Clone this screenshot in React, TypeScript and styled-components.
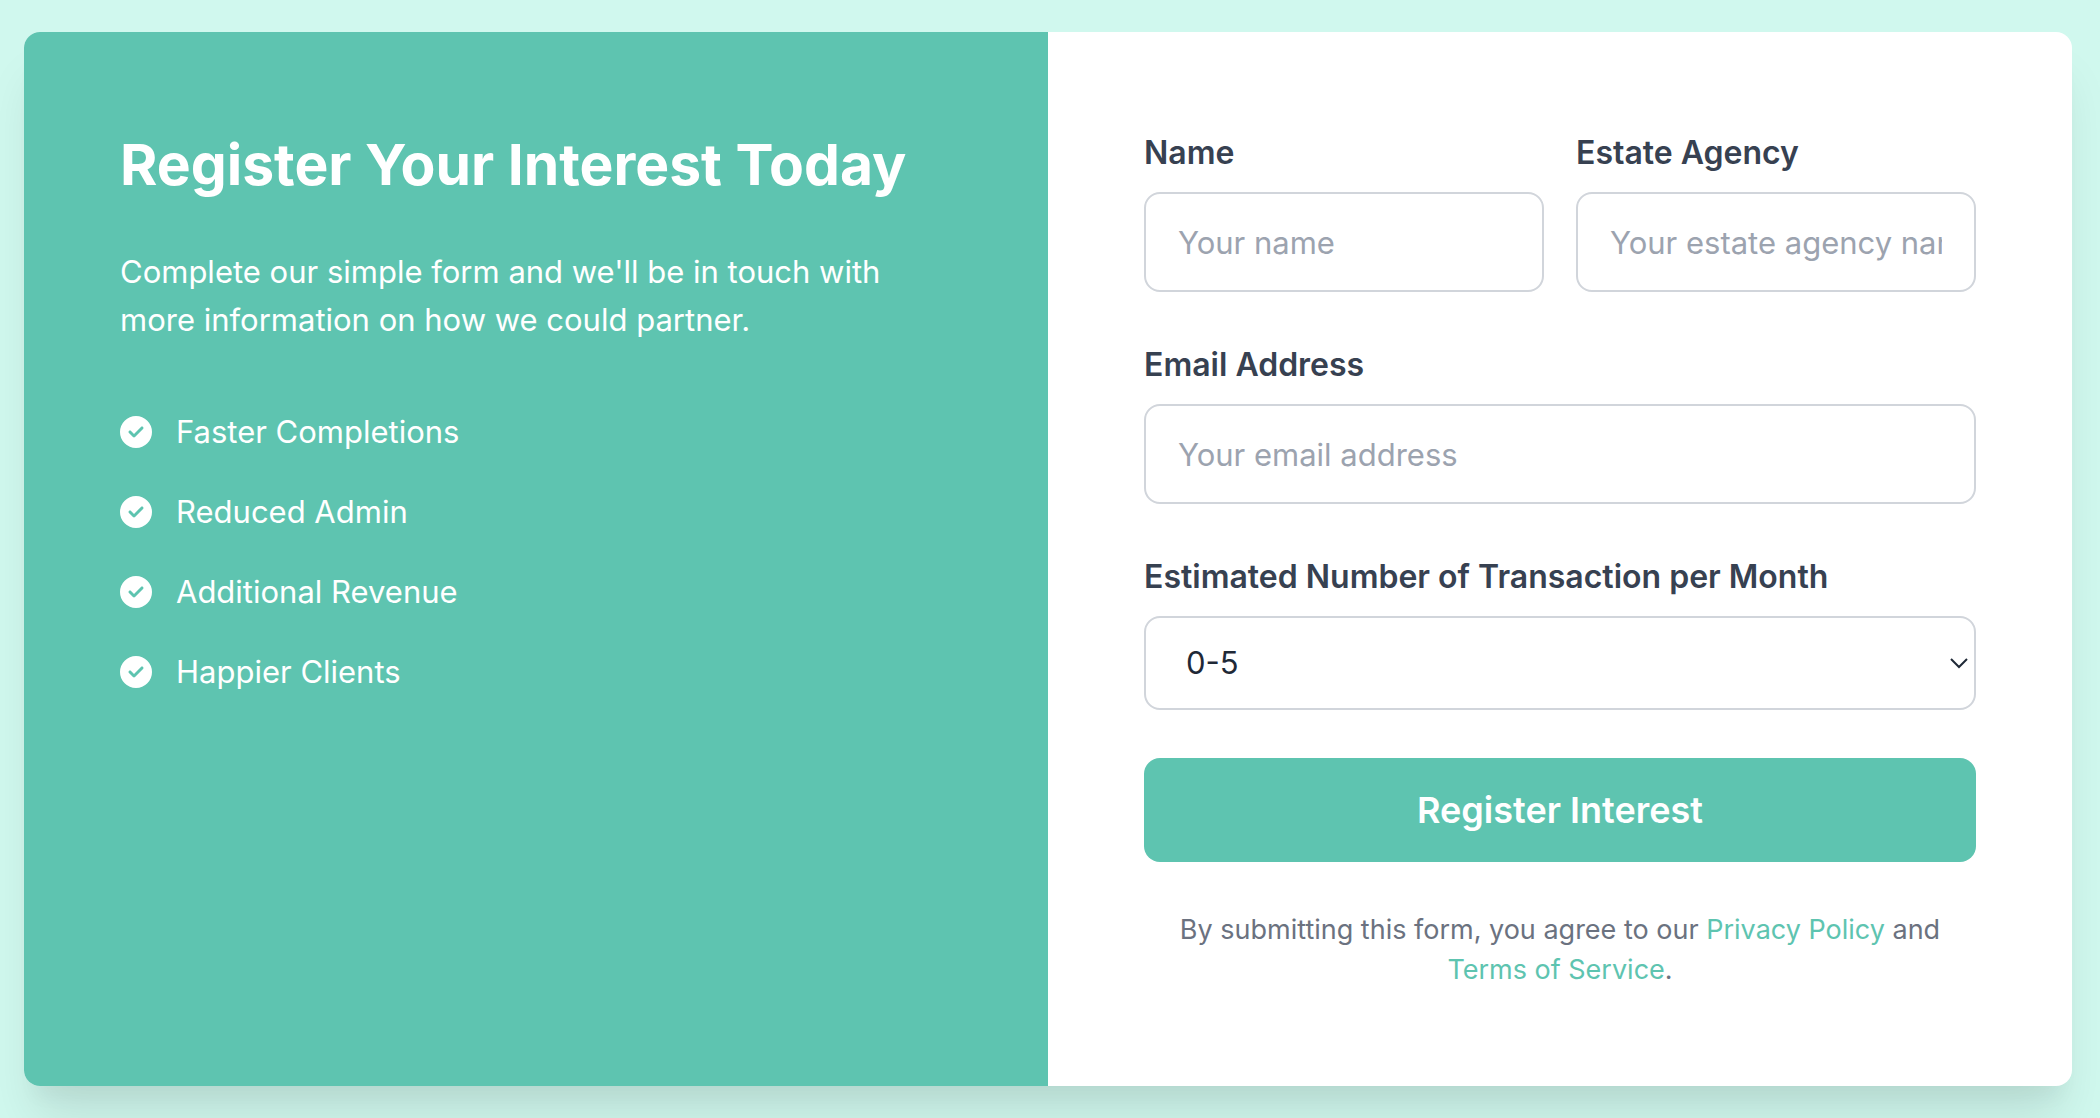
import React from "react";
import styled, { createGlobalStyle } from "styled-components";
import { FaCircleCheck } from "react-icons/fa6";

const GlobalStyle = createGlobalStyle`
  *, *::before, *::after { box-sizing: border-box; }
  body {
    margin: 0;
    background: #d0f8ee;
    color: #1f2937;
    font-family: Inter, "Liberation Sans", sans-serif;
    font-size: 31px;
    line-height: 48px;
  }
`;

const Page = styled.main`
  min-height: 100vh;
  padding: 32px 28px 32px 24px;
`;

const Card = styled.section`
  display: grid;
  grid-template-columns: 1fr 1fr;
  overflow: hidden;
  border-radius: 16px;
  background: #ffffff;
  box-shadow: 0 40px 50px -10px rgba(0, 0, 0, 0.1), 0 20px 20px -10px rgba(0, 0, 0, 0.04);
`;

const Intro = styled.div`
  padding: 96px;
  background: #5ec4b0;
  color: #ffffff;
`;

const Title = styled.h1`
  margin: 0 0 46px;
  font-size: 57px;
  font-weight: 700;
  line-height: 74px;
`;

const Lead = styled.p`
  margin: 0 0 64px;
`;

const Benefits = styled.ul`
  display: grid;
  gap: 32px;
  margin: 0;
  padding: 0;
  list-style: none;
`;

const Benefit = styled.li`
  display: flex;
  align-items: center;
  gap: 24px;
`;

const Form = styled.form`
  display: grid;
  gap: 48px;
  padding: 96px;
`;

const FieldRow = styled.div`
  display: grid;
  grid-template-columns: 1fr 1fr;
  gap: 32px;
`;

const Field = styled.div`
  display: grid;
  gap: 14px;
  min-width: 0;
`;

const Label = styled.label`
  color: #374151;
  font-size: 32px;
  font-weight: 600;
  line-height: 50px;
`;

const Input = styled.input`
  width: 100%;
  height: 100px;
  padding: 0 32px;
  border: 2px solid #d1d5db;
  border-radius: 16px;
  background: #ffffff;
  color: inherit;
  font: inherit;

  &::placeholder {
    color: #9ca3af;
    opacity: 1;
  }
`;

const SelectBox = styled.div`
  display: grid;
  align-items: center;

  > * {
    grid-area: 1 / 1;
  }
`;

const Select = styled.select`
  width: 100%;
  height: 94px;
  padding: 0 40px;
  border: 2px solid #d1d5db;
  border-radius: 16px;
  background: #ffffff;
  color: inherit;
  font: inherit;
  appearance: none;
`;

const Chevron = styled.svg`
  justify-self: end;
  margin-right: 8px;
  pointer-events: none;
`;

const Submit = styled.button`
  height: 104px;
  border: 0;
  border-radius: 16px;
  background: #5ec4b0;
  color: #ffffff;
  font: inherit;
  font-size: 36px;
  font-weight: 600;
  cursor: pointer;
`;

const Terms = styled.p`
  margin: 0;
  color: #6b7280;
  font-size: 27px;
  line-height: 40px;
  text-align: center;
`;

const TermsLink = styled.a`
  color: #5ec4b0;
  text-decoration: none;
`;

const benefits = ["Faster Completions", "Reduced Admin", "Additional Revenue", "Happier Clients"];
const ranges = ["0-5", "6-10", "11-20", "20+"];

export default function App() {
  return (
    <>
      <GlobalStyle />
      <Page>
        <Card>
          <Intro>
            <Title>Register Your Interest Today</Title>
            <Lead>
              Complete our simple form and we'll be in touch with more information on how we could
              partner.
            </Lead>
            <Benefits>
              {benefits.map((text) => (
                <Benefit key={text}>
                  <FaCircleCheck size={32} aria-hidden="true" />
                  {text}
                </Benefit>
              ))}
            </Benefits>
          </Intro>
          <Form onSubmit={(event: React.FormEvent) => event.preventDefault()}>
            <FieldRow>
              <Field>
                <Label htmlFor="name">Name</Label>
                <Input id="name" type="text" placeholder="Your name" />
              </Field>
              <Field>
                <Label htmlFor="agency">Estate Agency</Label>
                <Input id="agency" type="text" placeholder="Your estate agency name" />
              </Field>
            </FieldRow>
            <Field>
              <Label htmlFor="email">Email Address</Label>
              <Input id="email" type="email" placeholder="Your email address" />
            </Field>
            <Field>
              <Label htmlFor="transactions">Estimated Number of Transaction per Month</Label>
              <SelectBox>
                <Select id="transactions" defaultValue="0-5">
                  {ranges.map((range) => (
                    <option key={range}>{range}</option>
                  ))}
                </Select>
                <Chevron width="18" height="12" viewBox="0 0 18 12" fill="none" aria-hidden="true">
                  <path d="M1 2L9 10L17 2" stroke="#1f2937" strokeWidth="2" />
                </Chevron>
              </SelectBox>
            </Field>
            <Submit type="submit">Register Interest</Submit>
            <Terms>
              By submitting this form, you agree to our <TermsLink href="#privacy">Privacy Policy</TermsLink> and{" "}
              <TermsLink href="#terms">Terms of Service</TermsLink>.
            </Terms>
          </Form>
        </Card>
      </Page>
    </>
  );
}
